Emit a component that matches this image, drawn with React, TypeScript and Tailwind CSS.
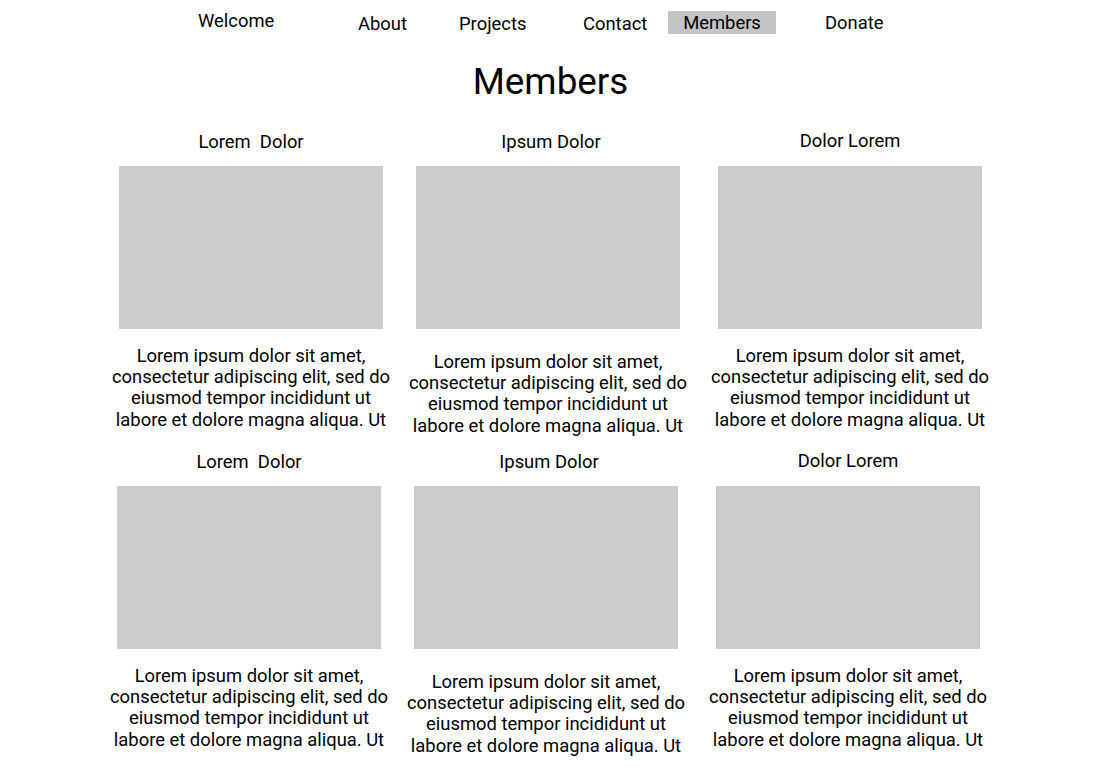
import React from 'react'

type Member = {
  name: string
  headCls: string
  imgMt: string
  textMt: string
}

const lines = [
  'Lorem ipsum dolor sit amet,',
  'consectetur adipiscing elit, sed do',
  'eiusmod tempor incididunt ut',
  'labore et dolore magna aliqua. Ut',
]

const members: Member[] = [
  { name: 'Lorem\u00a0 Dolor', headCls: '-mt-px', imgMt: 'mt-[14px]', textMt: 'mt-[16px]' },
  { name: 'Ipsum Dolor', headCls: '-mt-px ml-[6px]', imgMt: 'mt-[14px]', textMt: 'mt-[22px]' },
  { name: 'Dolor Lorem', headCls: '-mt-[2px]', imgMt: 'mt-[15px]', textMt: 'mt-[16px]' },
]

const MemberCard = ({ m }: { m: Member }) => (
  <div className="flex flex-col items-center">
    <h2 className={`${m.headCls} text-[18.4px] leading-[21px] text-black whitespace-pre`}>{m.name}</h2>
    <div className={`${m.imgMt} w-[264px] h-[163px] bg-[#cccccc]`} />
    <p className={`${m.textMt} text-[18.4px] leading-[21.4px] text-black text-center`}>
      {lines.map((l, i) => (
        <span key={i} className="block whitespace-nowrap">{l}</span>
      ))}
    </p>
  </div>
)

export default function App() {
  return (
    <div className="w-[1101px] h-[780px] bg-white font-['Roboto',sans-serif] text-black overflow-hidden">
      {/* Nav */}
      <nav className="h-[44px] flex items-start pl-[198px] text-[18.4px] leading-[21px]">
        <a className="w-[160px] mt-[10px]">Welcome</a>
        <a className="w-[101px] mt-[12.5px]">About</a>
        <a className="w-[124px] mt-[12.5px]">Projects</a>
        <a className="w-[85px] mt-[13.3px]">Contact</a>
        <div className="w-[157px]">
          <a className="block mt-[11px] bg-[#c4c4c4] w-[108px] pt-[0.8px] pb-[1.2px] text-center">Members</a>
        </div>
        <a className="mt-[11.6px]">Donate</a>
      </nav>

      <h1 className="mt-[17px] text-center text-[36.8px] leading-[42px]">Members</h1>

      {/* Rows */}
      <div className="mt-[28.6px] h-[320px] ml-[101px] grid grid-cols-[300px_294px_310px]">
        {members.map(m => <MemberCard key={m.name} m={m} />)}
      </div>
      <div className="h-[320px] ml-[99px] grid grid-cols-[300px_294px_310px]">
        {members.map(m => <MemberCard key={m.name} m={m} />)}
      </div>
    </div>
  )
}
